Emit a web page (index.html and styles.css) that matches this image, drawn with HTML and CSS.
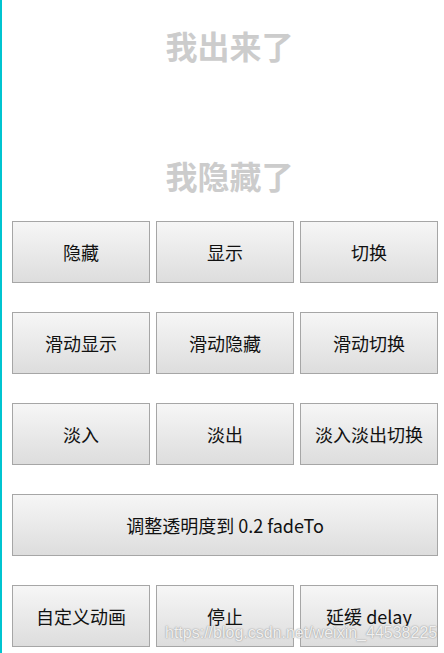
FILE: index.html
```html
<!DOCTYPE html>
<html lang="zh">
<head>
<meta charset="utf-8">
<link rel="stylesheet" href="styles.css">
</head>
<body>
<div class="page">
  <div class="title first">我出来了</div>
  <div class="title second">我隐藏了</div>
  <div class="grid">
    <button class="btn">隐藏</button>
    <button class="btn">显示</button>
    <button class="btn">切换</button>
    <button class="btn">滑动显示</button>
    <button class="btn">滑动隐藏</button>
    <button class="btn">滑动切换</button>
    <button class="btn">淡入</button>
    <button class="btn">淡出</button>
    <button class="btn">淡入淡出切换</button>
    <button class="btn wide">调整透明度到 0.2 fadeTo</button>
    <button class="btn">自定义动画</button>
    <button class="btn">停止</button>
    <button class="btn">延缓 delay</button>
  </div>
  <div class="watermark">https://blog.csdn.net/weixin_44538225</div>
</div>
</body>
</html>
```
FILE: styles.css
```css
html, body {
  margin: 0;
  padding: 0;
  background: #fff;
}
.page {
  position: relative;
  width: 444px;
  height: 653px;
  box-sizing: border-box;
  border-left: 2px solid #00c4d0;
  padding: 25px 6px 0 10px;
  overflow: hidden;
  font-family: "Noto Sans CJK SC", sans-serif;
}
.title {
  height: 40px;
  line-height: 40px;
  font-size: 32px;
  font-weight: bold;
  color: #cccccc;
  text-align: center;
  padding-left: 9px;
}
.second {
  margin-top: 90px;
}
.grid {
  margin-top: 26px;
  display: grid;
  grid-template-columns: 138px 138px 138px;
  column-gap: 6px;
  row-gap: 29px;
}
.btn {
  height: 62px;
  margin: 0;
  padding: 0;
  border: 1px solid #a6a6a6;
  border-radius: 0;
  background: linear-gradient(#f6f6f6, #dddddd);
  font-family: "Noto Sans CJK SC", sans-serif;
  font-size: 18px;
  color: #111;
  line-height: 1;
}
.wide {
  grid-column: 1 / 4;
}
.watermark {
  position: absolute;
  left: 163px;
  top: 624px;
  font-family: "Liberation Sans", Arial, sans-serif;
  font-size: 16px;
  color: rgba(255, 255, 255, 0.85);
  text-shadow: 0 0 1px #999, 0 0 2px #aaa;
  white-space: nowrap;
}
```
